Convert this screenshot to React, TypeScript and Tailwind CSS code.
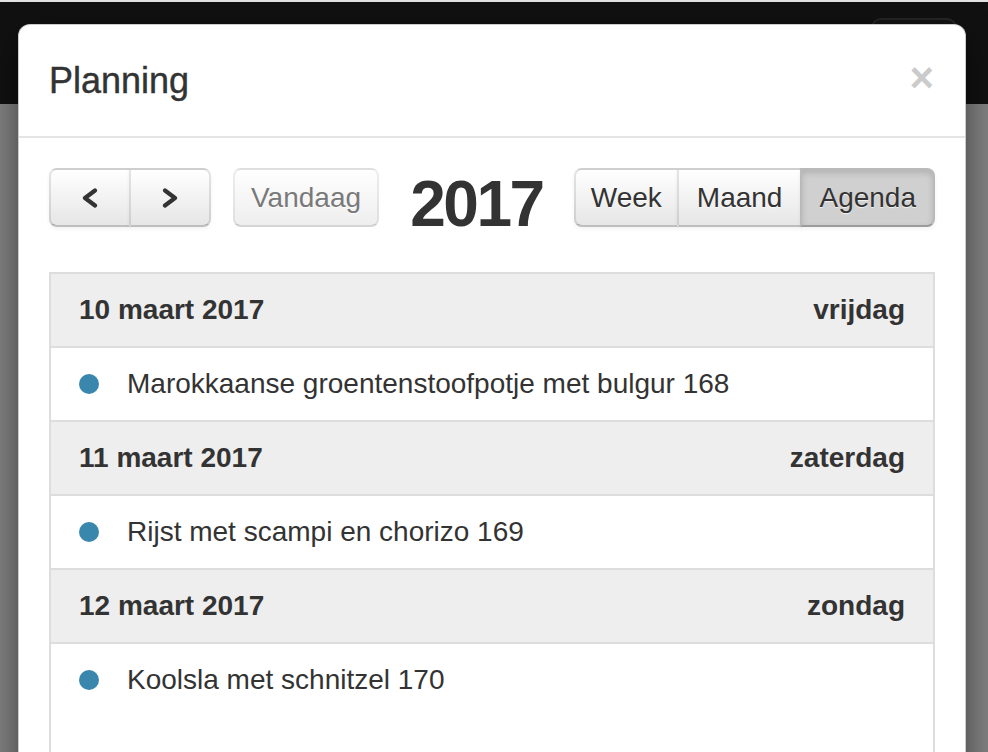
import React from "react";

const btnBase =
  "h-[59px] px-[17px] flex items-center justify-center text-[28px] text-[#333] bg-[#f5f5f5] bg-gradient-to-b from-white to-[#e6e6e6] border-2 border-[rgba(0,0,0,0.1)] border-b-[rgba(0,0,0,0.25)] [text-shadow:0_1px_1px_rgba(255,255,255,0.75)] shadow-[inset_0_1px_0_rgba(255,255,255,0.2),0_2px_4px_rgba(0,0,0,0.05)]";

function Chevron({ dir }: { dir: "left" | "right" }) {
  return (
    <svg width="16" height="20" viewBox="0 0 16 20" fill="none">
      <polyline
        points={dir === "left" ? "13,2.5 3,10 13,17.5" : "3,2.5 13,10 3,17.5"}
        stroke="#333"
        strokeWidth="4.2"
        strokeLinecap="round"
        strokeLinejoin="round"
      />
    </svg>
  );
}

const days = [
  { date: "10 maart 2017", day: "vrijdag", item: "Marokkaanse groentenstoofpotje met bulgur 168" },
  { date: "11 maart 2017", day: "zaterdag", item: "Rijst met scampi en chorizo 169" },
  { date: "12 maart 2017", day: "zondag", item: "Koolsla met schnitzel 170" },
];

export default function App() {
  return (
    <div
      className="relative w-[988px] h-[752px] overflow-hidden bg-[#808080]"
      style={{ fontFamily: '"Liberation Sans", Arial, Helvetica, sans-serif' }}
    >
      {/* page behind overlay */}
      <div className="flex flex-col">
        <div className="h-[2px] bg-[#e2e2e2]" />
        <div className="h-[102px] bg-[#111] flex justify-end pr-[31px] pt-[16px]">
          <div className="w-[86px] h-[70px] rounded-[10px] border-2 border-[#262626] bg-[#141414]" />
        </div>
      </div>

      {/* modal */}
      <div className="absolute left-[18px] top-[24px] w-[948px] h-[900px] bg-white rounded-[12px] border border-[rgba(0,0,0,0.2)] shadow-[0_10px_30px_rgba(0,0,0,0.5)]">
        <div className="flex items-start justify-between px-[30px] pt-[30px] pb-[30px] border-b-2 border-[#e5e5e5]">
          <h3 className="text-[36px] leading-[51px] text-[#333] m-0 [-webkit-text-stroke:0.4px_#333]">Planning</h3>
          <button className="text-[42px] font-bold leading-none text-black opacity-20 mt-[2px] mr-[1px]">×</button>
        </div>

        <div className="p-[30px]">
          {/* toolbar */}
          <div className="flex items-start mb-[36px]">
            <div className="flex items-center">
              <div className="flex">
                <div className={`${btnBase} w-[82px] rounded-l-[8px]`}>
                  <Chevron dir="left" />
                </div>
                <div className={`${btnBase} w-[82px] rounded-r-[8px] -ml-[2px]`}>
                  <Chevron dir="right" />
                </div>
              </div>
              <div className={`${btnBase} ml-[22px] !px-[16px] rounded-[8px] opacity-65 shadow-none`}>Vandaag</div>
            </div>
            <div className="flex-1 flex justify-center">
              <h2 className="text-[64px] font-bold leading-[64px] tracking-[-2.5px] text-[#333] mt-[4px]">2017</h2>
            </div>
            <div className="flex">
              <div className={`${btnBase} !px-[15px] rounded-l-[8px]`}>Week</div>
              <div className={`${btnBase} !px-[18px] -ml-[2px]`}>Maand</div>
              <div
                className={`${btnBase} -ml-[2px] rounded-r-[8px] !bg-none !bg-[#d0d0d0] shadow-[inset_0_3px_6px_rgba(0,0,0,0.15),0_2px_4px_rgba(0,0,0,0.05)]`}
              >
                Agenda
              </div>
            </div>
          </div>

          {/* list */}
          <div className="border-2 border-[#ddd] h-[700px]">
            {days.map((d, i) => (
              <div key={i}>
                <div
                  className={`flex justify-between items-center bg-[#eee] px-[28px] py-[16px] border-b-2 border-[#ddd] ${
                    i > 0 ? "border-t-2" : ""
                  }`}
                >
                  <span className="text-[28px] leading-[40px] font-bold text-[#333]">{d.date}</span>
                  <span className="text-[28px] leading-[40px] font-bold text-[#333]">{d.day}</span>
                </div>
                <div className="flex items-center py-[16px] pl-[28px]">
                  <span className="w-[20px] h-[20px] rounded-full bg-[#3a87ad] shrink-0" />
                  <span className="pl-[28px] text-[28px] leading-[40px] text-[#333]">{d.item}</span>
                </div>
              </div>
            ))}
          </div>
        </div>
      </div>
    </div>
  );
}
